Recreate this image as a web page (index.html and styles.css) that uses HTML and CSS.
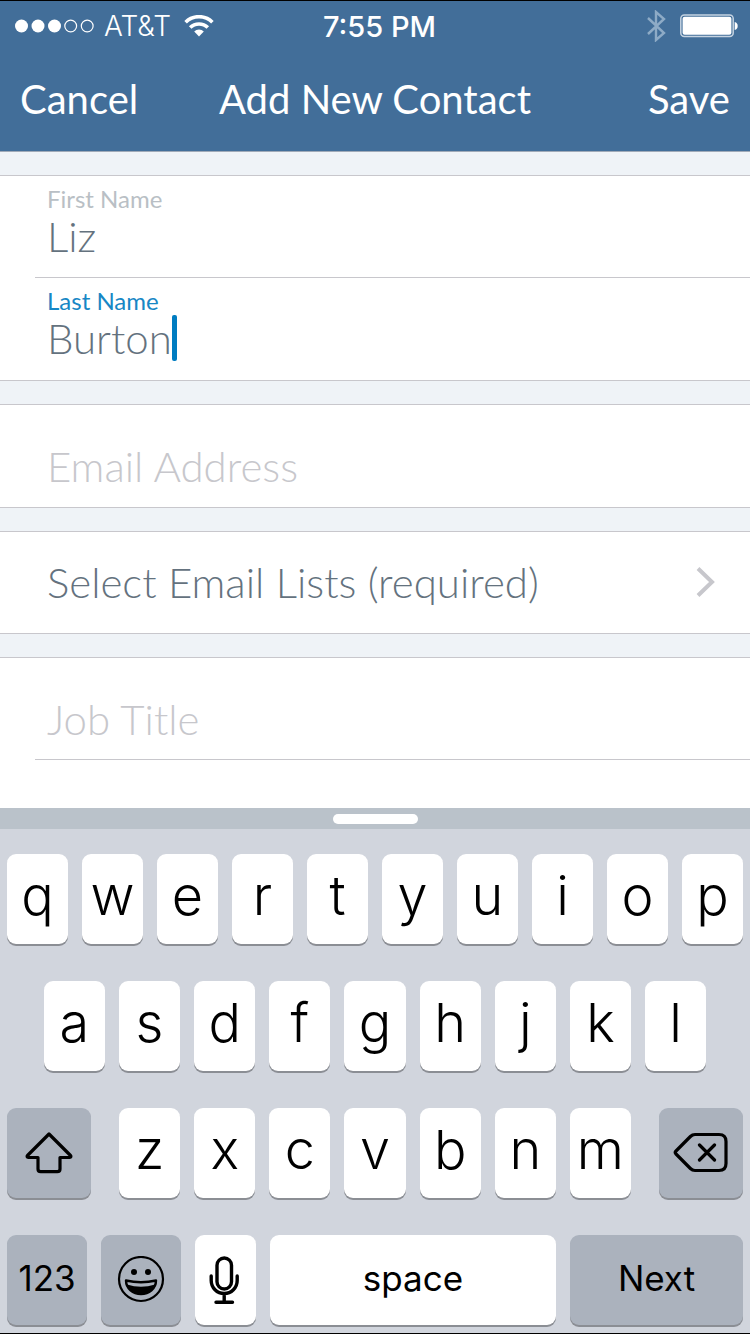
FILE: index.html
```html
<!DOCTYPE html>
<html lang="en">
<head>
<meta charset="utf-8">
<meta name="viewport" content="width=device-width, initial-scale=1">
<title>Add New Contact</title>
<link rel="stylesheet" href="styles.css">
</head>
<body>
<header class="header">
  <div class="status">
    <div class="status-left">
      <svg class="signal" width="79" height="14" viewBox="0 0 79 14" aria-hidden="true">
        <g fill="#fff"><circle cx="6.5" cy="7" r="6.5"/><circle cx="23" cy="7" r="6.5"/><circle cx="39.5" cy="7" r="6.5"/></g>
        <g fill="none" stroke="#fff" stroke-width="1.2"><circle cx="55.7" cy="7" r="5.9"/><circle cx="72.2" cy="7" r="5.9"/></g>
      </svg>
      <span class="carrier">AT&amp;T</span>
      <svg class="wifi" width="30" height="22" viewBox="0 0 30 22" aria-hidden="true">
        <g fill="none" stroke="#fff" stroke-width="3.6"><path d="M1.600 7.200a19 19 0 0 1 26.800 0"/><path d="M6.200 12.600a12.400 12.400 0 0 1 17.600 0"/></g>
        <path d="M10.200 16.600a6.800 6.800 0 0 1 9.600 0L15 21.400z" fill="#fff"/>
      </svg>
    </div>
    <time class="clock">7:55 PM</time>
    <div class="status-right">
      <svg width="19" height="32" viewBox="0 0 19 32" fill="none" stroke="#8eabc6" stroke-width="2.400" aria-hidden="true"><path d="M1 8l16 15-8 7V2l8 7L1 24"/></svg>
      <svg width="58" height="24" viewBox="0 0 58 24" aria-hidden="true">
        <rect x=".8" y="1" width="52.400" height="21.500" rx="3.500" fill="none" stroke="#c5d3e1" stroke-width="1.500"/>
        <rect x="2.600" y="2.800" width="48.800" height="18" rx="2" fill="#fff"/>
        <path d="M54.700 8c4 .5 4 7.500 0 8z" fill="#fff"/>
      </svg>
    </div>
  </div>
  <nav class="navbar">
    <button class="nav-button" type="button">Cancel</button>
    <h1 class="title">Add New Contact</h1>
    <button class="nav-button nav-save" type="button">Save</button>
  </nav>
</header>

<main class="form">
  <section class="group">
    <div class="field">
      <label class="label" for="first">First Name</label>
      <input class="input" id="first" type="text" value="Liz">
    </div>
    <div class="field field-active">
      <label class="label" for="last">Last Name</label>
      <div class="entry">
        <input class="input input-fit" id="last" type="text" value="Burton" size="6">
        <span class="caret"></span>
      </div>
    </div>
  </section>
  <section class="group">
    <div class="field field-empty">
      <input class="input" type="email" placeholder="Email Address" aria-label="Email Address">
    </div>
  </section>
  <section class="group">
    <button class="picker" type="button">
      <span>Select Email Lists (required)</span>
      <svg width="20" height="32" viewBox="0 0 20 32" fill="none" stroke="#c7c7cc" stroke-width="4" aria-hidden="true"><path d="M2 2.500L16 16 2 29.500"/></svg>
    </button>
  </section>
  <section class="group group-last">
    <div class="field field-empty">
      <input class="input" type="text" placeholder="Job Title" aria-label="Job Title">
    </div>
    <div class="field"></div>
  </section>
</main>

<section class="keyboard" aria-label="Keyboard">
  <div class="grabber"><span class="grip"></span></div>
  <div class="keys">
    <div class="row row-top">
      <button class="key">q</button><button class="key">w</button><button class="key">e</button><button class="key">r</button><button class="key">t</button><button class="key">y</button><button class="key">u</button><button class="key">i</button><button class="key">o</button><button class="key">p</button>
    </div>
    <div class="row row-home">
      <button class="key">a</button><button class="key">s</button><button class="key">d</button><button class="key">f</button><button class="key">g</button><button class="key">h</button><button class="key">j</button><button class="key">k</button><button class="key">l</button>
    </div>
    <div class="row row-shift">
      <button class="key key-dark" aria-label="Shift">
        <svg width="48" height="44" viewBox="0 0 48 44" fill="none" stroke="#000" stroke-width="3.200" stroke-linejoin="round" aria-hidden="true"><path d="M24 3L2.500 24.500c-.8.800-.5 2 .8 2H13V38q0 2.700 2.700 2.700h16.600Q35 40.700 35 38V26.500h9.700c1.300 0 1.600-1.200.8-2z"/></svg>
      </button>
      <div class="letters">
        <button class="key">z</button><button class="key">x</button><button class="key">c</button><button class="key">v</button><button class="key">b</button><button class="key">n</button><button class="key">m</button>
      </div>
      <button class="key key-dark" aria-label="Delete">
        <svg width="56" height="42" viewBox="0 0 56 42" fill="none" stroke="#000" stroke-width="3.200" stroke-linejoin="round" stroke-linecap="round" aria-hidden="true"><path d="M22 2.500h24q7 0 7 7v22q0 7-7 7H22q-2.600 0-4.600-2L3 22q-1.500-1.500 0-3L17.400 4.500q2-2 4.600-2zM26.500 13l15 15M41.500 13l-15 15"/></svg>
      </button>
    </div>
    <div class="row row-bottom">
      <button class="key key-dark key-word">123</button>
      <button class="key key-dark" aria-label="Emoji">
        <svg width="48" height="48" viewBox="0 0 48 48" fill="none" stroke="#000" aria-hidden="true"><circle cx="24" cy="23" r="22" stroke-width="2.200"/><circle cx="17" cy="16" r="3" fill="#000" stroke="none"/><circle cx="31" cy="16" r="3" fill="#000" stroke="none"/><path d="M9 24.500q15 3.500 30 0c0 8-7 13.500-15 13.500S9 32.500 9 24.500z" stroke-width="2.400" stroke-linejoin="round"/><path d="M10 28.500q14 4.500 28 0-2.500 9.500-14 9.500t-14-9.500z" fill="#000" stroke="none"/></svg>
      </button>
      <button class="key" aria-label="Dictation">
        <svg width="34" height="48" viewBox="0 0 34 48" fill="none" stroke="#000" stroke-width="3.400" stroke-linecap="round" aria-hidden="true"><rect x="8" y="2" width="14.500" height="31" rx="7.250"/><path d="M2.200 20v4.500a13 13 0 0 0 26 0V20M15.200 38v8M7 46.200h16.500"/></svg>
      </button>
      <button class="key key-word">space</button>
      <button class="key key-dark key-word">Next</button>
    </div>
  </div>
</section>
</body>
</html>
```
FILE: styles.css
```css
* {
  box-sizing: border-box;
}

body {
  margin: 0;
  min-height: 100vh;
  display: flex;
  flex-direction: column;
  background: #eff3f7;
  border-top: 1px solid #000;
  border-bottom: 1px solid #000;
  font-family: Lato, "Open Sans", sans-serif;
  color: #64727e;
}

button,
input {
  margin: 0;
  padding: 0;
  border: 0;
  background: none;
  font: inherit;
  color: inherit;
}

svg {
  display: block;
}

.header {
  background: #426e99;
  border-bottom: 1px solid #a0aab8;
  color: #fff;
}

.status {
  display: grid;
  grid-template-columns: 1fr auto 1fr;
  align-items: center;
  height: 50px;
  padding: 0 12px 0 15px;
  font-family: Inter, Roboto, sans-serif;
  font-size: 28px;
}

.status-left,
.status-right {
  display: flex;
  align-items: center;
}

.status-left {
  gap: 10px;
}

.status-right {
  justify-content: flex-end;
  gap: 14px;
}

.carrier {
  font-weight: 350;
}

.wifi {
  margin-left: 3px;
}

.clock {
  padding-left: 6px;
  font-size: 29px;
  font-weight: 500;
}

.navbar {
  display: grid;
  grid-template-columns: 1fr auto 1fr;
  align-items: center;
  height: 100px;
  padding: 0 20px 4px;
  font-size: 40px;
  line-height: 96px;
}

.nav-button {
  text-align: left;
}

.nav-save {
  text-align: right;
}

.title {
  margin: 0;
  font: inherit;
}

.form {
  flex: 1;
  display: flex;
  flex-direction: column;
  gap: 23px;
  padding-top: 23px;
  font-size: 42px;
  font-weight: 300;
}

.group {
  background: #fff;
  border-top: 1px solid #c8c7cc;
  border-bottom: 1px solid #c8c7cc;
}

.group-last {
  flex: 1;
  border-bottom: 0;
}

.field {
  margin-left: 35px;
  padding: 9px 12px 0;
}

.field:not(:last-child) {
  border-bottom: 1px solid #c8c7cc;
}

.field:not(:empty) {
  height: 102px;
}

.label {
  display: block;
  font-size: 24px;
  font-weight: 400;
  line-height: 28px;
  color: #b9bfc5;
}

.field-active .label {
  color: #1787c5;
}

.input {
  display: block;
  width: 100%;
  height: 46px;
  line-height: 46px;
  outline: 0;
}

.input::placeholder {
  color: #c7c7cc;
  opacity: 1;
}

.field-empty {
  padding-top: 38px;
}

.entry {
  display: flex;
}

.input-fit {
  width: auto;
  field-sizing: content;
}

.caret {
  width: 5px;
  height: 46px;
  border-radius: 2px;
  background: #007cc1;
}

.picker {
  display: flex;
  align-items: center;
  justify-content: space-between;
  width: 100%;
  height: 101px;
  padding: 0 34px 2px 47px;
}

.keyboard {
  background: #d1d5dd;
}

.grabber {
  display: flex;
  align-items: center;
  justify-content: center;
  height: 21px;
  background: #bac2ca;
}

.grip {
  width: 85px;
  height: 10px;
  border-radius: 5px;
  background: #fff;
}

.keys {
  display: grid;
  gap: 37px;
  padding: 25px 7px 8px;
  font-family: Inter, Roboto, sans-serif;
}

.row {
  display: grid;
  gap: 14px;
}

.row-top {
  grid-template-columns: repeat(10, minmax(0, 1fr));
}

.row-home {
  grid-template-columns: repeat(9, minmax(0, 1fr));
  padding: 0 5%;
}

.row-shift {
  grid-template-columns: 84fr 512fr 84fr;
  gap: 28px;
}

.letters {
  display: grid;
  grid-template-columns: repeat(7, minmax(0, 1fr));
  gap: 14px;
}

.row-bottom {
  grid-template-columns: 80fr 80fr 61fr 286fr 173fr;
}

.key {
  display: flex;
  align-items: center;
  justify-content: center;
  height: 90px;
  min-width: 0;
  padding-bottom: 8px;
  border-radius: 9px;
  background: #fff;
  box-shadow: 0 2px 0 #8b8e94;
  font-size: 54px;
  font-weight: 350;
  color: #000;
}

.key svg {
  flex: none;
  margin-top: 8px;
}

.key-dark {
  background: #abb2bd;
}

.key-word {
  padding-bottom: 4px;
  font-size: 35px;
  font-weight: 400;
}
```
